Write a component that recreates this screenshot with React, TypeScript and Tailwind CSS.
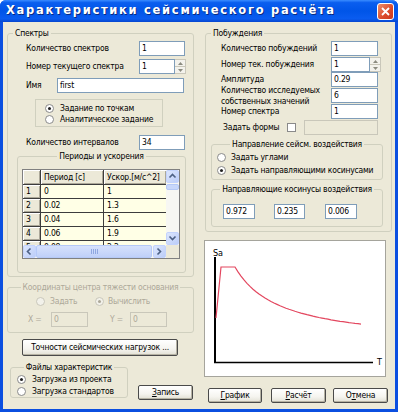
import React from 'react';

interface EditProps {
    value?: string;
    className?: string;
    disabled?: boolean;
}

const Edit: React.FC<EditProps> = ({ value, className, disabled }) => (
    <div
        className={`h-[15px] shrink-0 border px-[2px] leading-[13px] whitespace-nowrap overflow-hidden ${
            disabled ? 'border-[#C9C7BA] bg-[#ECE9D8] text-[#ACA899]' : 'border-[#7F9DB9] bg-white text-black'
        } ${className ?? ''}`}
    >
        {value}
    </div>
);

const Spinner: React.FC = () => (
    <div className="flex h-[15px] w-[11px] shrink-0 flex-col border border-l-0 border-[#C9C7BA] bg-[#F3F2EC]">
        <div className="flex flex-1 items-center justify-center border-b border-[#C9C7BA]">
            <svg width="5" height="3" viewBox="0 0 5 3"><path d="M0 3 L2.5 0 L5 3 Z" fill="#8B8B80" /></svg>
        </div>
        <div className="flex flex-1 items-center justify-center">
            <svg width="5" height="3" viewBox="0 0 5 3"><path d="M0 0 L2.5 3 L5 0 Z" fill="#8B8B80" /></svg>
        </div>
    </div>
);

const Radio: React.FC<{ checked?: boolean; disabled?: boolean }> = ({ checked, disabled }) => (
    <div
        className={`flex h-[9px] w-[9px] shrink-0 items-center justify-center rounded-full border ${
            disabled ? 'border-[#C9C7BA] bg-[#F2F1EA]' : 'border-[#8A8A8A] bg-white'
        }`}
    >
        {checked && <div className={`h-[3px] w-[3px] rounded-full ${disabled ? 'bg-[#ACA899]' : 'bg-[#222]'}`} />}
    </div>
);

const XpButton: React.FC<{ className?: string; children: React.ReactNode }> = ({ className, children }) => (
    <button
        className={`flex items-center justify-center whitespace-nowrap rounded-[2px] border border-[#4A4A4A] bg-[linear-gradient(180deg,#FFFFFF_0%,#F5F4EF_60%,#E2E0D4_100%)] leading-[13px] text-black shadow-[inset_-1px_-1px_0_#B5B2A3] ${className ?? ''}`}
    >
        {children}
    </button>
);

const ScrollBtn: React.FC<{ dir: 'up' | 'down' | 'left' | 'right'; className?: string }> = ({ dir, className }) => {
    const d = {
        up: 'M1.5 5.5 L4.5 2.5 L7.5 5.5',
        down: 'M1.5 2.5 L4.5 5.5 L7.5 2.5',
        left: 'M5.5 1.5 L2.5 4.5 L5.5 7.5',
        right: 'M2.5 1.5 L5.5 4.5 L2.5 7.5',
    }[dir];
    return (
        <div
            className={`flex h-[13px] w-[13px] shrink-0 items-center justify-center rounded-[2px] border border-[#C3D3FD] bg-[linear-gradient(135deg,#DCE6FD_0%,#BCCDF8_100%)] ${className ?? ''}`}
        >
            <svg width="9" height="9" viewBox="0 0 9 9">
                <path d={d} fill="none" stroke="#4D6185" strokeWidth="1.6" />
            </svg>
        </div>
    );
};

const rows = [
    ['1', '0', '1'],
    ['2', '0.02', '1.3'],
    ['3', '0.04', '1.6'],
    ['4', '0.06', '1.9'],
    ['5', '0.08', '2.2'],
];

const headCell = 'bg-[#ECE9D8] px-[3px] whitespace-nowrap shadow-[inset_1px_1px_0_#FFFFFF,inset_-1px_-1px_0_#ACA899]';

const Grid: React.FC = () => (
    <div className="flex h-[90px] w-[158px] flex-col border border-[#808080]">
        <div className="flex h-[75px]">
            <div className="grid h-[75px] w-[143px] grid-cols-[17px_62px_62px] grid-rows-[14px_13px_13px_13px_13px_13px] gap-px overflow-hidden bg-[#3C3C3C]">
                <div className={`${headCell} leading-[14px]`} />
                <div className={`${headCell} leading-[14px]`}>Период [с]</div>
                <div className={`${headCell} leading-[14px]`}>Ускор.[м/с^2]</div>
                {rows.map(r => (
                    <React.Fragment key={r[0]}>
                        <div className={`${headCell} leading-[13px]`}>{r[0]}</div>
                        <div className="bg-[#FFFFE6] px-[3px] leading-[13px]">{r[1]}</div>
                        <div className="bg-[#FFFFE6] px-[3px] leading-[13px]">{r[2]}</div>
                    </React.Fragment>
                ))}
            </div>
            <div className="flex w-[13px] flex-col bg-[#F7F7F3]">
                <ScrollBtn dir="up" />
                <div className="mt-px h-[6px] rounded-[2px] border border-[#B5C9F7] bg-[#C8D7FB]" />
                <div className="flex-1" />
                <ScrollBtn dir="down" />
            </div>
        </div>
        <div className="flex h-[13px]">
            <div className="flex w-[143px] bg-[#F7F7F3]">
                <ScrollBtn dir="left" />
                <div className="flex w-[116px] items-center justify-center rounded-[2px] border border-[#B5C9F7] bg-[linear-gradient(180deg,#D6E1FC_0%,#BFD0F9_100%)]">
                    <div className="flex gap-px">
                        <div className="h-[5px] w-px bg-[#8FA7E0]" />
                        <div className="h-[5px] w-px bg-[#8FA7E0]" />
                        <div className="h-[5px] w-px bg-[#8FA7E0]" />
                        <div className="h-[5px] w-px bg-[#8FA7E0]" />
                    </div>
                </div>
                <div className="flex-1" />
                <ScrollBtn dir="right" />
            </div>
            <div className="w-[13px] bg-[#ECE9D8]" />
        </div>
    </div>
);

const Chart: React.FC = () => {
    // seismic spectrum: rise, plateau, then ~1/T decay
    const pts: string[] = ['11,77', '16,26', '30,26'];
    for (let x = 238; x <= 361; x += 3) {
        const h = 17.5 + 3487 / (x - 190);
        pts.push(`${x - 205},${(362 - h - 241).toFixed(1)}`);
    }
    return (
        <div className="h-[137px] w-[182px] border border-[#A5A49C] bg-white">
            <svg width="180" height="135" viewBox="0 0 180 135">
                <text x="8" y="15" fontSize="9" fontFamily="'DejaVu Sans Condensed','Liberation Sans',sans-serif" fill="#000">Sa</text>
                <line x1="10" y1="16" x2="10" y2="122" stroke="#000" strokeWidth="2" />
                <line x1="9" y1="121.5" x2="168" y2="121.5" stroke="#000" strokeWidth="1.5" />
                <text x="172" y="124" fontSize="9" fontFamily="'DejaVu Sans Condensed','Liberation Sans',sans-serif" fill="#000">T</text>
                <polyline points={pts.join(' ')} fill="none" stroke="#E3475F" strokeWidth="1.2" />
            </svg>
        </div>
    );
};

const App: React.FC = () => {
    return (
        <div className="flex h-[412px] w-[398px] flex-col overflow-hidden rounded-t-[6px] bg-[#0B4FE0] font-['DejaVu_Sans_Condensed','Liberation_Sans',sans-serif] text-[8.5px] tracking-[-0.2px] text-black">
            {/* title bar */}
            <div className="flex h-[22px] shrink-0 items-center justify-between bg-[linear-gradient(180deg,#3A8CFF_0%,#0A5EEF_12%,#0055E8_50%,#0A5CF0_85%,#0646CF_100%)] pl-[6px] pr-[4px]">
                <span className="whitespace-nowrap font-['DejaVu_Sans','Liberation_Sans',sans-serif] text-[11.5px] font-bold tracking-[1.7px] text-white [text-shadow:1px_1px_0_#0A2A80]">
                    Характеристики сейсмического расчёта
                </span>
                <div className="flex h-[17px] w-[17px] shrink-0 items-center justify-center rounded-[3px] border border-white bg-[linear-gradient(135deg,#EE8E6C_0%,#DB4A2B_60%,#C83A1E_100%)]">
                    <svg width="9" height="9" viewBox="0 0 9 9">
                        <path d="M1 1 L8 8 M8 1 L1 8" stroke="#fff" strokeWidth="1.8" />
                    </svg>
                </div>
            </div>

            {/* body */}
            <div className="mx-[3px] mb-[3px] flex flex-1 whitespace-nowrap bg-[#ECE9D8] pl-[4px] pt-[5px]">
                {/* left column */}
                <div className="flex w-[187px] flex-col">
                    <fieldset className="h-[250px] w-[187px] rounded-[3px] border border-[#D0D0BF]">
                        <legend className="ml-[5px] px-[2px] leading-[12px]">Спектры</legend>
                        <div className="pl-[18px] pt-[2px]">
                            <div className="flex h-[15px] items-center">
                                <span className="w-[113px]">Количество спектров</span>
                                <Edit value="1" className="w-[46px]" />
                            </div>
                            <div className="mt-[3px] flex h-[15px] items-center">
                                <span className="w-[113px]">Номер текущего спектра</span>
                                <Edit value="1" className="w-[36px]" />
                                <Spinner />
                            </div>
                            <div className="mt-[4px] flex h-[15px] items-center">
                                <span className="w-[31px]">Имя</span>
                                <Edit value="first" className="w-[127px]" />
                            </div>
                            <div className="ml-[9px] mt-[6px] h-[28px] w-[128px] border border-[#D0D0BF] pl-[9px] pt-[3px]">
                                <div className="flex h-[11px] items-center gap-[6px]">
                                    <Radio checked />
                                    <span>Задание по точкам</span>
                                </div>
                                <div className="flex h-[11px] items-center gap-[6px]">
                                    <Radio />
                                    <span>Аналитическое задание</span>
                                </div>
                            </div>
                            <div className="mt-[8px] flex h-[15px] items-center">
                                <span className="w-[113px]">Количество интервалов</span>
                                <Edit value="34" className="w-[46px]" />
                            </div>
                        </div>
                        <fieldset className="ml-[9px] h-[123px] w-[169px] rounded-[3px] border border-[#D0D0BF]">
                            <legend className="mx-auto px-[2px] leading-[12px]">Периоды и ускорения</legend>
                            <div className="ml-[4px] mt-[7px]">
                                <Grid />
                            </div>
                        </fieldset>
                    </fieldset>

                    <fieldset className="mt-[4px] h-[52px] w-[187px] rounded-[3px] border border-[#D0D0BF] text-[#ACA899]">
                        <legend className="mx-auto px-[2px] leading-[12px]">Координаты центра тяжести основания</legend>
                        <div className="mt-[3px] flex h-[11px] items-center pl-[28px]">
                            <div className="flex w-[59px] items-center gap-[5px]">
                                <Radio disabled />
                                <span>Задать</span>
                            </div>
                            <div className="flex items-center gap-[4px]">
                                <Radio checked disabled />
                                <span>Вычислить</span>
                            </div>
                        </div>
                        <div className="mt-[5px] flex h-[15px] items-center pl-[20px]">
                            <span className="w-[23px]">X =</span>
                            <Edit value="0" disabled className="w-[37px]" />
                            <span className="ml-[22px] w-[20px]">Y =</span>
                            <Edit value="0" disabled className="w-[37px]" />
                        </div>
                    </fieldset>

                    <XpButton className="ml-[15px] mt-[6px] h-[17px] w-[156px]">Точности сейсмических нагрузок ...</XpButton>

                    <div className="mt-[5px] flex items-start">
                        <fieldset className="ml-[3px] h-[37px] w-[118px] rounded-[3px] border border-[#D0D0BF]">
                            <legend className="mx-auto px-[2px] leading-[12px]">Файлы характеристик</legend>
                            <div className="pl-[6px]">
                                <div className="flex h-[12px] items-center gap-[6px]">
                                    <Radio checked />
                                    <span>Загрузка из проекта</span>
                                </div>
                                <div className="flex h-[12px] items-center gap-[6px]">
                                    <Radio />
                                    <span>Загрузка стандартов</span>
                                </div>
                            </div>
                        </fieldset>
                        <XpButton className="ml-[10px] mt-[24px] h-[15px] w-[55px]">
                            <span><u>З</u>апись</span>
                        </XpButton>
                    </div>
                </div>

                {/* right column */}
                <div className="ml-[10px] flex w-[189px] flex-col">
                    <fieldset className="ml-[1px] h-[205px] w-[187px] rounded-[3px] border border-[#D0D0BF]">
                        <legend className="ml-[5px] px-[2px] leading-[12px]">Побуждения</legend>
                        <div className="pl-[15px] pt-[2px]">
                            <div className="flex h-[15px] items-center">
                                <span className="w-[110px]">Количество побуждений</span>
                                <Edit value="1" className="w-[47px]" />
                            </div>
                            <div className="mt-px flex h-[15px] items-center">
                                <span className="w-[110px]">Номер тек. побуждения</span>
                                <Edit value="1" className="w-[39px]" />
                                <Spinner />
                            </div>
                            <div className="flex h-[15px] items-center">
                                <span className="w-[110px]">Амплитуда</span>
                                <Edit value="0.29" className="w-[47px]" />
                            </div>
                            <div className="mt-px flex h-[15px] items-center">
                                <span className="w-[110px] leading-[11px]">
                                    Количество исследуемых
                                    <br />
                                    собственных значений
                                </span>
                                <Edit value="6" className="w-[47px]" />
                            </div>
                            <div className="mt-px flex h-[15px] items-center">
                                <span className="w-[110px]">Номер спектра</span>
                                <Edit value="1" className="w-[47px]" />
                            </div>
                            <div className="mt-px flex h-[15px] items-center pl-[2px]">
                                <span className="w-[64px]">Задать формы</span>
                                <div className="h-[9px] w-[9px] shrink-0 border border-[#8A8A8A] bg-white" />
                                <Edit disabled className="ml-[8px] w-[74px]" />
                            </div>
                        </div>
                        <fieldset className="ml-[5px] mt-[3px] h-[42px] w-[172px] rounded-[3px] border border-[#D0D0BF]">
                            <legend className="mx-auto px-[2px] leading-[12px]">Направление сейсм. воздействия</legend>
                            <div className="mt-px pl-[5px]">
                                <div className="flex h-[13px] items-center gap-[5px]">
                                    <Radio />
                                    <span>Задать углами</span>
                                </div>
                                <div className="flex h-[13px] items-center gap-[5px]">
                                    <Radio checked />
                                    <span>Задать направляющими косинусами</span>
                                </div>
                            </div>
                        </fieldset>
                        <fieldset className="ml-[5px] mt-[3px] h-[44px] w-[172px] rounded-[3px] border border-[#D0D0BF]">
                            <legend className="mx-auto px-[2px] leading-[12px]">Направляющие косинусы воздействия</legend>
                            <div className="mt-[9px] flex pl-[11px]">
                                <Edit value="0.972" className="w-[32px]" />
                                <Edit value="0.235" className="ml-[19px] w-[31px]" />
                                <Edit value="0.006" className="ml-[20px] w-[32px]" />
                            </div>
                        </fieldset>
                    </fieldset>

                    <div className="mt-[8px]">
                        <Chart />
                    </div>

                    <div className="mt-[11px] flex">
                        <XpButton className="ml-[4px] h-[15px] w-[54px]">
                            <span><u>Г</u>рафик</span>
                        </XpButton>
                        <XpButton className="ml-[9px] h-[15px] w-[55px]">
                            <span><u>Р</u>асчёт</span>
                        </XpButton>
                        <XpButton className="ml-[7px] h-[15px] w-[55px]">
                            <span>О<u>т</u>мена</span>
                        </XpButton>
                    </div>
                </div>
            </div>
        </div>
    );
};

export default App;
